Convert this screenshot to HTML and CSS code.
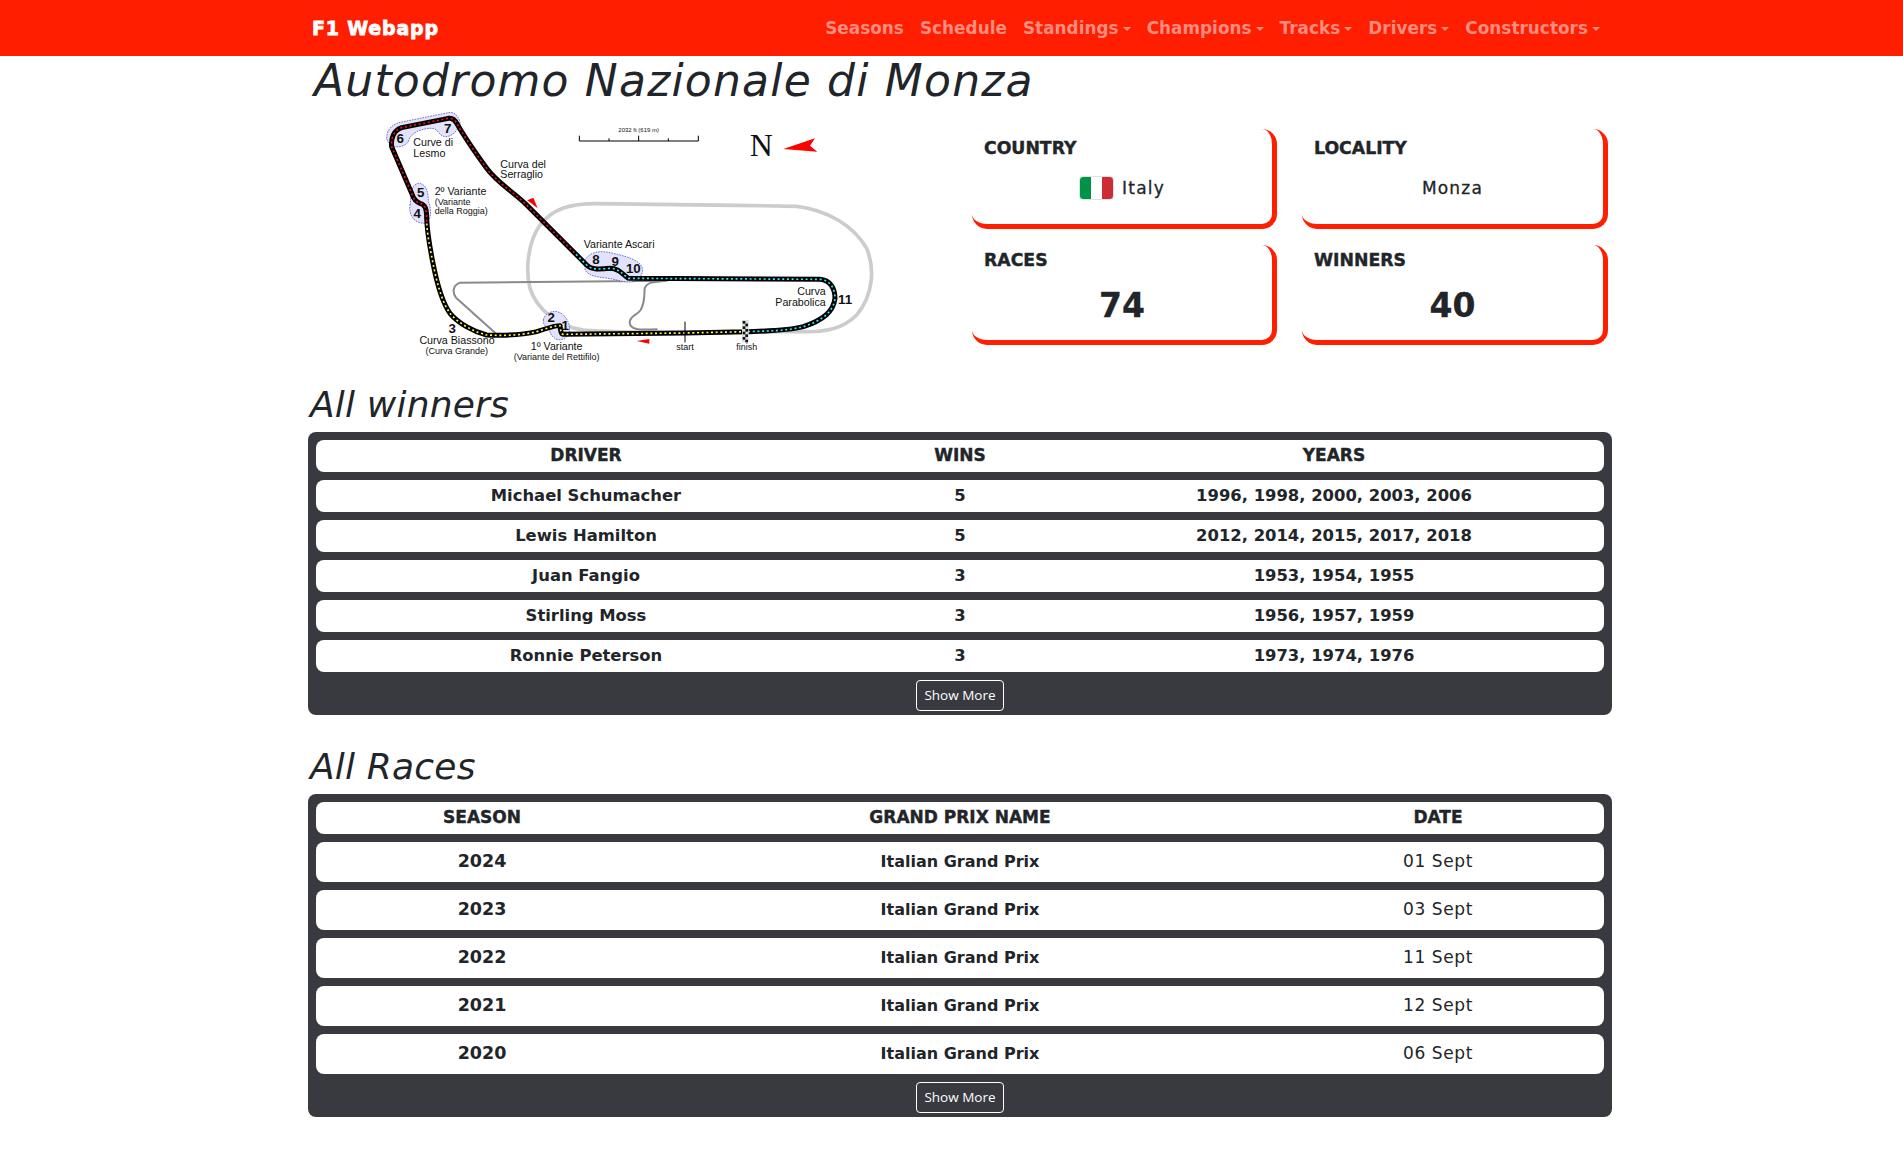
FILE: index.html
```html
<!DOCTYPE html>
<html lang="en">
<head>
<meta charset="utf-8">
<title>Autodromo Nazionale di Monza</title>
<link rel="stylesheet" href="styles.css">
</head>
<body>
<nav class="navbar">
  <div class="navbar-inner">
    <a class="brand">F1 Webapp</a>
    <ul class="nav-links">
      <li>Seasons</li>
      <li>Schedule</li>
      <li class="dropdown">Standings</li>
      <li class="dropdown">Champions</li>
      <li class="dropdown">Tracks</li>
      <li class="dropdown">Drivers</li>
      <li class="dropdown">Constructors</li>
    </ul>
  </div>
</nav>
<main class="container">
  <h1 class="page-title">Autodromo Nazionale di Monza</h1>
  <section class="hero">
    <svg class="circuit" viewBox="0 0 1560 810" role="img" aria-label="Monza circuit map">
      <g fill="none" stroke-linejoin="round" stroke-linecap="round">
        <path class="oval" d="M1220,680 C1100,684 760,684 640,675 C560,665 500,610 480,550 C465,490 475,410 510,360 C550,310 600,296 680,296 L1100,301 L1280,304 C1370,315 1450,360 1490,430 C1515,490 1510,570 1460,630 C1420,670 1370,682 1300,680 L1220,680"/>
        <path class="old-track" d="M385,692 L258,578 C245,560 250,540 270,533 L890,527 C850,530 830,532 824,550 C822,570 826,590 812,615 C800,632 780,632 779,652 C780,672 800,676 860,673"/>
      </g>
      <g class="zone">
        <path d="M50,100 C50,70 70,55 100,50 L240,22 C260,22 272,45 270,62 C260,75 250,95 225,95 C200,90 210,70 180,70 C150,72 120,85 115,110 C100,130 60,135 50,100Z"/>
        <path d="M120,300 C125,270 120,240 145,235 C170,235 175,265 175,290 C185,310 185,350 165,355 C140,355 115,340 120,300Z"/>
        <path d="M645,465 C660,440 690,435 730,445 C770,455 815,465 818,495 C815,525 790,540 740,525 C700,515 660,520 645,495Z"/>
        <path d="M520,645 C525,620 560,610 580,630 C600,650 605,680 590,695 C570,715 545,700 540,680 C530,665 518,660 520,645Z"/>
      </g>
      <g fill="none" stroke-linejoin="round">
        <path class="track" d="M1127,680 L945,684 L580,688 C572,688 572,675 570,662 C560,660 530,670 500,680 C450,692 400,692 350,690 C310,680 265,655 240,625 C215,590 200,530 190,480 C180,430 172,390 170,340 C170,310 165,298 150,295 C135,290 130,280 125,265 L65,125 C62,100 72,75 95,68 L235,40 C250,38 258,50 262,58 C280,90 310,135 350,190 C380,232 432,262 470,300 L650,480 C665,495 690,493 720,490 C745,490 755,505 775,520 L1350,523 C1380,525 1395,550 1395,580 C1390,620 1360,645 1300,665 C1250,678 1190,678 1127,680"/>
        <path class="dash dash-yellow" d="M1127,680 L945,684 L580,688 C572,688 572,675 570,662 C560,660 530,670 500,680 C450,692 400,692 350,690 C310,680 265,655 240,625 C215,590 200,530 190,480 C180,430 172,390 170,350"/>
        <path class="dash dash-red" d="M170,350 C170,310 165,298 150,295 C135,290 130,280 125,265 L65,125 C62,100 72,75 95,68 L235,40 C250,38 258,50 262,58 C280,90 310,135 350,190 C380,232 432,262 470,300 L618,448"/>
        <path class="dash dash-cyan" d="M618,448 L650,480 C665,495 690,493 720,490 C745,490 755,505 775,520 L1350,523 C1380,525 1395,550 1395,580 C1390,620 1360,645 1300,665 C1250,678 1190,678 1127,680"/>
      </g>
      <path class="marker" d="M472,286 L490,278 L503,310Z"/>
      <path class="marker" d="M800,708 L838,702 L838,716Z"/>
      <path class="marker" d="M1240,132 L1335,100 L1320,122 L1342,140Z"/>
      <path class="scale" d="M628,92 V108 H985 V92 M717,108 V100 M806,108 V92 M895,108 V100"/>
      <path class="scale" d="M945,650 V712"/>
      <rect class="checker" x="1116" y="645" width="20" height="67"/>
      <g class="checks">
        <rect x="1118" y="648" width="8" height="8"/><rect x="1126" y="656" width="8" height="8"/>
        <rect x="1118" y="664" width="8" height="8"/><rect x="1126" y="672" width="8" height="8"/>
        <rect x="1118" y="680" width="8" height="8"/><rect x="1126" y="688" width="8" height="8"/>
        <rect x="1118" y="696" width="8" height="8"/><rect x="1126" y="704" width="8" height="8"/>
      </g>
      <text class="north" x="1139" y="153">N</text>
      <text class="tiny" x="806" y="82">2032 ft (619 m)</text>
      <g class="num">
        <text x="233" y="83">7</text><text x="91" y="115">6</text>
        <text x="152" y="276">5</text><text x="142" y="338">4</text>
        <text x="247" y="684">3</text><text x="544" y="651">2</text><text x="586" y="675">1</text>
        <text x="678" y="478">8</text><text x="736" y="482">9</text><text x="790" y="504">10</text>
        <text x="1425" y="597">11</text>
      </g>
      <g class="label">
        <text x="130" y="124">Curve di</text><text x="130" y="155">Lesmo</text>
        <text x="391" y="188">Curva del</text><text x="391" y="220">Serraglio</text>
        <text x="194" y="270">2º Variante</text>
        <text x="641" y="428">Variante Ascari</text>
        <text class="end" x="1367" y="571">Curva</text><text class="end" x="1367" y="604">Parabolica</text>
        <text class="mid" x="261" y="718">Curva Biassono</text>
        <text class="mid" x="560" y="734">1º Variante</text>
      </g>
      <g class="label small">
        <text x="194" y="300">(Variante</text><text x="194" y="328">della Roggia)</text>
        <text class="mid" x="260" y="748">(Curva Grande)</text>
        <text class="mid" x="560" y="766">(Variante del Rettifilo)</text>
        <text class="mid" x="945" y="736">start</text>
        <text class="mid" x="1130" y="736">finish</text>
      </g>
    </svg>
    <div class="cards">
      <div class="card">
        <h5 class="card-label">COUNTRY</h5>
        <div class="card-value"><span class="flag"></span>Italy</div>
      </div>
      <div class="card">
        <h5 class="card-label">LOCALITY</h5>
        <div class="card-value">Monza</div>
      </div>
      <div class="card stat">
        <h5 class="card-label">RACES</h5>
        <div class="card-value big">74</div>
      </div>
      <div class="card stat">
        <h5 class="card-label">WINNERS</h5>
        <div class="card-value big">40</div>
      </div>
    </div>
  </section>

  <h2 class="section-title">All winners</h2>
  <section class="panel winners">
    <div class="row head"><div>DRIVER</div><div>WINS</div><div>YEARS</div></div>
    <div class="row"><div>Michael Schumacher</div><div>5</div><div>1996, 1998, 2000, 2003, 2006</div></div>
    <div class="row"><div>Lewis Hamilton</div><div>5</div><div>2012, 2014, 2015, 2017, 2018</div></div>
    <div class="row"><div>Juan Fangio</div><div>3</div><div>1953, 1954, 1955</div></div>
    <div class="row"><div>Stirling Moss</div><div>3</div><div>1956, 1957, 1959</div></div>
    <div class="row"><div>Ronnie Peterson</div><div>3</div><div>1973, 1974, 1976</div></div>
    <div class="panel-foot"><button class="more">Show More</button></div>
  </section>

  <h2 class="section-title second">All Races</h2>
  <section class="panel races">
    <div class="row head"><div>SEASON</div><div>GRAND PRIX NAME</div><div>DATE</div></div>
    <div class="row tall"><div class="year">2024</div><div>Italian Grand Prix</div><div class="plain">01 Sept</div></div>
    <div class="row tall"><div class="year">2023</div><div>Italian Grand Prix</div><div class="plain">03 Sept</div></div>
    <div class="row tall"><div class="year">2022</div><div>Italian Grand Prix</div><div class="plain">11 Sept</div></div>
    <div class="row tall"><div class="year">2021</div><div>Italian Grand Prix</div><div class="plain">12 Sept</div></div>
    <div class="row tall"><div class="year">2020</div><div>Italian Grand Prix</div><div class="plain">06 Sept</div></div>
    <div class="panel-foot"><button class="more">Show More</button></div>
  </section>
</main>
</body>
</html>
```
FILE: styles.css
```css
* { box-sizing: border-box; }
html, body { margin: 0; padding: 0; }
body {
  background: #fff;
  color: #212529;
  font-family: "DejaVu Sans", sans-serif;
  font-size: 16px;
  min-height: 1157px;
}

.navbar { background: #ff1e00; height: 56px; }
.navbar-inner {
  width: 1321px;
  height: 56px;
  margin: 0 auto;
  padding: 0 12px 0 21px;
  display: flex;
  align-items: center;
  justify-content: space-between;
}
.brand { color: #fff; font-weight: 700; font-size: 19px; letter-spacing: .8px; -webkit-text-stroke: .8px #fff; }
.nav-links {
  list-style: none;
  display: flex;
  gap: 16px;
  margin: 0;
  padding: 0;
  color: #ff8e80;
  font-weight: 700;
  font-size: 16.8px;
  letter-spacing: .07px;
}
.dropdown::after {
  content: "";
  display: inline-block;
  margin-left: 4px;
  vertical-align: 3px;
  border-top: 4.8px solid currentColor;
  border-left: 4px solid transparent;
  border-right: 4px solid transparent;
}

.container { width: 1321px; margin: 0 auto; padding-left: 17px; }

.page-title {
  margin: 0;
  height: 49px;
  padding-left: 6px;
  font-size: 44px;
  line-height: 49px;
  letter-spacing: 1.2px;
  font-weight: 200;
  font-style: italic;
  white-space: nowrap;
}

.hero { display: flex; height: 270px; align-items: flex-start; }
.circuit { width: 520px; height: 270px; margin-left: 62px; flex: none; }
.oval { stroke: #ccc; stroke-width: 11; }
.old-track { stroke: #8a8a8a; stroke-width: 6; }
.zone path { fill: #e2e2fb; stroke: #3333bb; stroke-width: 2; stroke-dasharray: 5 3; }
.track { stroke: #000; stroke-width: 15; }
.dash { stroke-width: 5; stroke-dasharray: 6 8; }
.dash-yellow { stroke: #ffff33; }
.dash-red { stroke: #ee1122; }
.dash-cyan { stroke: #33eeff; }
.marker { fill: #ff0000; }
.scale { fill: none; stroke: #000; stroke-width: 3; }
.checker { fill: #ddd; }
.checks rect { fill: #111; }
.circuit text { font-family: "Liberation Sans", sans-serif; fill: #111; }
.north { font-family: "Liberation Serif", serif !important; font-size: 96px; }
.tiny { font-size: 18px; text-anchor: middle; }
.num text { font-size: 40px; font-weight: 700; text-anchor: middle; }
.label text { font-size: 32px; }
.label.small text { font-size: 27px; }
.label .mid { text-anchor: middle; }
.label .end { text-anchor: end; }

.cards {
  margin: 24px 0 0 82px;
  display: grid;
  grid-template-columns: 305px 306px;
  grid-auto-rows: 100px;
  column-gap: 25px;
  row-gap: 16px;
}
.card {
  display: flex;
  flex-direction: column;
  padding: 10px 0 6px 12px;
  background: #fff;
  border-right: 5px solid #ff1e00;
  border-bottom: 5px solid #ff1e00;
  border-radius: 15px;
}
.card.stat { padding-top: 6px; padding-bottom: 0; }
.card-label {
  margin: 0;
  font-size: 17.3px;
  line-height: 19px;
  font-weight: 700;
  -webkit-text-stroke: .4px #212529;
}
.card-value {
  flex: 1;
  display: flex;
  align-items: center;
  justify-content: center;
  gap: 8px;
  padding-right: 12px;
  font-size: 17px;
  letter-spacing: 1.2px;
  -webkit-text-stroke: .3px #212529;
}
.card-value.big { font-size: 33px; font-weight: 700; letter-spacing: 0; }
.flag {
  width: 35px;
  height: 24px;
  border: 1px solid #dee2e6;
  border-radius: 4px;
  background: linear-gradient(90deg, #009246 33.3%, #fff 33.3% 66.6%, #ce2b37 66.6%);
}

.section-title {
  margin: 0;
  height: 57px;
  padding: 3px 0 0 2px;
  font-size: 36px;
  line-height: 54px;
  letter-spacing: .2px;
  font-weight: 200;
  font-style: italic;
}
.section-title.second { margin-top: 22px; }

.panel {
  width: 1304px;
  padding: 8px 8px 4px;
  background: #393a3f;
  border-radius: 8px;
  display: flex;
  flex-direction: column;
  gap: 8px;
}
.row {
  display: grid;
  align-items: center;
  height: 32px;
  padding-bottom: 2px;
  background: #fff;
  border-radius: 8px;
  text-align: center;
  font-weight: 700;
  font-size: 16.4px;
}
.winners .row { grid-template-columns: 540px 208px 540px; }
.races .row { grid-template-columns: 332px 624px 332px; font-size: 16px; }
.row.tall { height: 40px; }
.row.head, .races .row.head { font-size: 17px; line-height: 30px; -webkit-text-stroke: .4px #212529; }
.year { font-size: 17.5px; }
.plain { font-weight: 400; font-size: 17px; letter-spacing: .6px; }
.panel-foot { display: flex; justify-content: center; }
.more {
  height: 31px;
  width: 88px;
  padding: 0 0 1px;
  background: transparent;
  color: #fff;
  border: 1px solid #fff;
  border-radius: 4px;
  font-family: "Open Sans", sans-serif;
  font-size: 13.5px;
}
```
